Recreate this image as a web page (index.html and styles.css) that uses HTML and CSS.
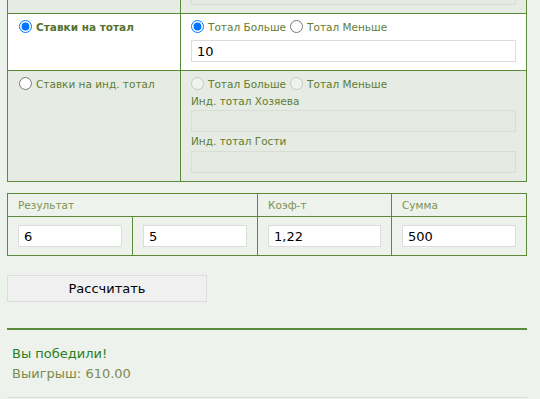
FILE: index.html
```html
<!DOCTYPE html>
<html lang="ru">
<head>
    <meta charset="UTF-8">
    <meta name="viewport" content="width=device-width, initial-scale=1.0">
    <title>Калькулятор ставок</title>
    <link rel="stylesheet" href="styles.css">
</head>
<body>
    <div class="page">
        <table class="bets">
            <colgroup>
                <col class="col-type">
                <col>
            </colgroup>
            <tr class="row-off">
                <td class="cell-type"></td>
                <td class="cell-opts"><input class="field" type="text" disabled></td>
            </tr>
            <tr class="row-on">
                <td class="cell-type">
                    <label class="choice strong"><input type="radio" name="type" checked> Ставки на тотал</label>
                </td>
                <td class="cell-opts">
                    <div class="choices">
                        <label class="choice"><input type="radio" name="total" checked> Тотал Больше</label>
                        <label class="choice"><input type="radio" name="total"> Тотал Меньше</label>
                    </div>
                    <input class="field field-first" type="text" value="10">
                </td>
            </tr>
            <tr class="row-off">
                <td class="cell-type">
                    <label class="choice"><input type="radio" name="type"> Ставки на инд. тотал</label>
                </td>
                <td class="cell-opts">
                    <div class="choices">
                        <label class="choice"><input type="radio" name="ind" disabled> Тотал Больше</label>
                        <label class="choice"><input type="radio" name="ind" disabled> Тотал Меньше</label>
                    </div>
                    <div class="caption">Инд. тотал Хозяева</div>
                    <input class="field" type="text" disabled>
                    <div class="caption caption-next">Инд. тотал Гости</div>
                    <input class="field" type="text" disabled>
                </td>
            </tr>
        </table>

        <table class="result">
            <colgroup>
                <col class="c1">
                <col class="c2">
                <col class="c3">
                <col class="c4">
            </colgroup>
            <tr class="head">
                <td colspan="2">Результат</td>
                <td>Коэф-т</td>
                <td>Сумма</td>
            </tr>
            <tr class="values">
                <td><input class="field" type="text" value="6"></td>
                <td><input class="field" type="text" value="5"></td>
                <td><input class="field" type="text" value="1,22"></td>
                <td><input class="field" type="text" value="500"></td>
            </tr>
        </table>

        <button class="calc-btn" type="button">Рассчитать</button>

        <div class="outcome">
            <div class="win">Вы победили!</div>
            <div class="payout">Выигрыш: 610.00</div>
        </div>
    </div>
</body>
</html>
```

FILE: styles.css
```css
* {
    box-sizing: border-box;
}

body {
    margin: 0;
    background: #edf2ec;
    font-family: "DejaVu Sans", Verdana, sans-serif;
    color: #5f7d33;
    overflow: hidden;
}

.page {
    width: 540px;
    padding: 0 13px 0 7px;
}

table {
    width: 520px;
    border-collapse: collapse;
    table-layout: fixed;
}

td {
    border: 1px solid #5b8a3b;
    vertical-align: top;
}

/* bets table */
.bets {
    margin-top: -24px;
}

.col-type {
    width: 173px;
}

.row-off td {
    background: #e6ebe4;
}

.row-on td {
    background: #ffffff;
}

.cell-type {
    padding: 6px 10px 8px 11px;
}

.cell-opts {
    padding: 6px 10px 8px 10px;
}

.choices {
    display: flex;
    gap: 4px;
}

.choice {
    display: flex;
    align-items: center;
    gap: 4px;
    height: 13px;
    font-size: 10.5px;
    white-space: nowrap;
}

.choice input {
    margin: 0;
    width: 13px;
    height: 13px;
}

.strong {
    font-weight: bold;
    color: #557330;
}

.caption {
    font-size: 10.5px;
    line-height: 16px;
    margin-top: 3px;
    margin-bottom: 1px;
}

.caption-next {
    margin-top: 1px;
    margin-bottom: 2px;
}

.field {
    display: block;
    width: 100%;
    height: 22px;
    margin: 0;
    padding: 0 5px;
    border: 1px solid #dcdcdc;
    background: #ffffff;
    font-family: "DejaVu Sans", Verdana, sans-serif;
    font-size: 13px;
    color: #000000;
    outline: none;
}

.field:disabled {
    background: #e4e9e2;
    border-color: #d9ddd7;
}

.field-first {
    margin-top: 7px;
}

/* result table */
.result {
    margin-top: 11px;
}

.c1,
.c2 {
    width: 125px;
}

.c3 {
    width: 134px;
}

.result td {
    background: #edf2ec;
}

.head td {
    padding: 4px 10px;
    font-size: 10.5px;
    line-height: 14px;
    color: #7c9250;
}

.values td {
    padding: 8px 10px 8px;
}

/* button and result */
.calc-btn {
    display: block;
    width: 200px;
    height: 27px;
    margin-top: 19px;
    border: 1px solid #dcdcdc;
    background: #f0f0f0;
    font-family: "DejaVu Sans", Verdana, sans-serif;
    font-size: 13px;
    color: #000000;
}

.outcome {
    margin-top: 26px;
    border-top: 2px solid #5b8a3b;
    border-bottom: 1px solid #dcdcdc;
    padding: 14px 5px 13px;
    font-size: 13px;
    line-height: 20px;
}

.win {
    color: #2a7f1c;
}

.payout {
    color: #7d8a4e;
}
```
